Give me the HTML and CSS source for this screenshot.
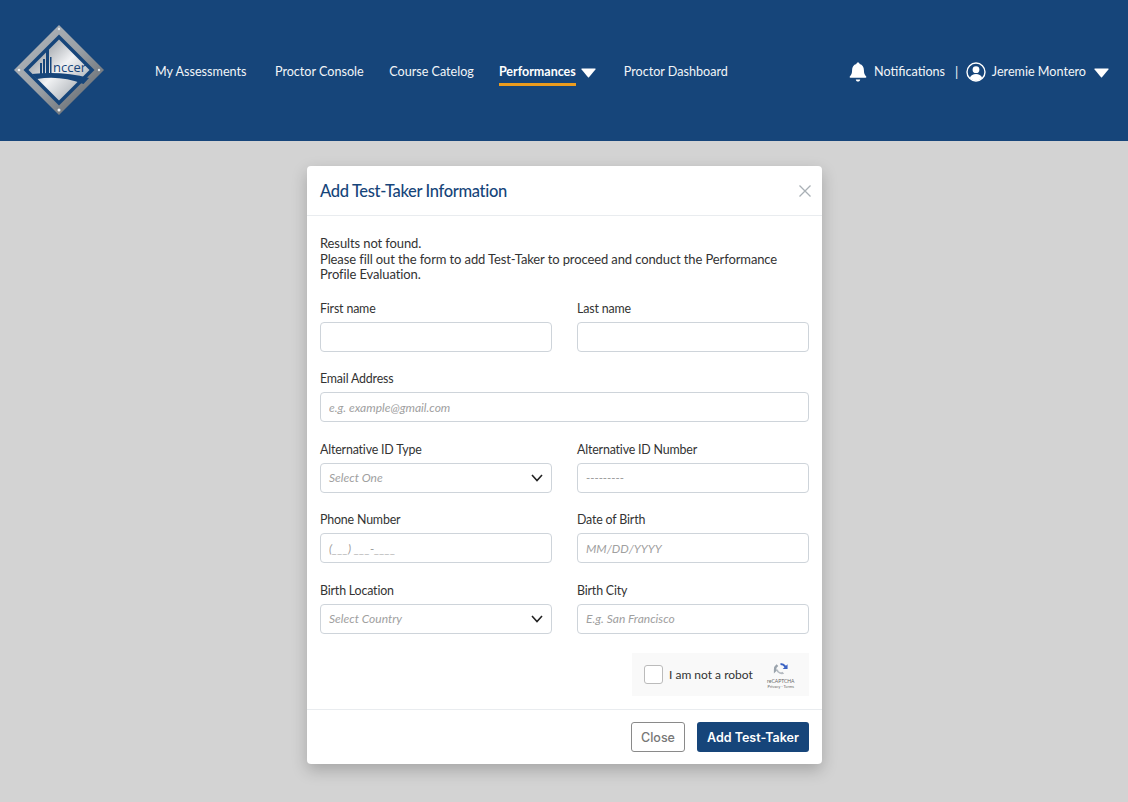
FILE: index.html
```html
<!DOCTYPE html>
<html lang="en">
<head>
    <meta charset="UTF-8">
    <meta name="viewport" content="width=device-width, initial-scale=1.0">
    <title>Add Test-Taker Information</title>
    <link rel="stylesheet" href="styles.css">
</head>
<body>

    <header class="topbar">
        <svg class="logo" width="92" height="92" viewBox="0 0 92 92" aria-label="NCCER logo">
            <defs>
                <linearGradient id="frame" x1="0" y1="0" x2="1" y2="1">
                    <stop offset="0" stop-color="#b4b9be"/>
                    <stop offset="0.5" stop-color="#9aa0a6"/>
                    <stop offset="1" stop-color="#54595f"/>
                </linearGradient>
                <linearGradient id="plate" x1="0" y1="0" x2="1" y2="1">
                    <stop offset="0.1" stop-color="#8b9197"/>
                    <stop offset="0.5" stop-color="#f1f2f4"/>
                    <stop offset="0.9" stop-color="#a3a9af"/>
                </linearGradient>
            </defs>
            <polygon points="46,1 91,46 46,91 1,46" fill="url(#frame)"/>
            <polygon points="46,10.5 81.5,46 46,81.5 10.5,46" fill="#16457a"/>
            <polygon points="46,15.5 76.5,46 46,76.5 15.5,46" fill="url(#plate)"/>
            <path d="M19 50 Q50 47 76 54 L70.5 60 Q47 51 24 55 Z" fill="#16457a"/>
            <path d="M27 39h2v11h-2zM30 35h2v15h-2zM33 27l3-2v25h-3zM37 33h1.5v17h-1.5z" fill="#16457a"/>
            <text class="logo-text" x="40" y="48">nccer</text>
            <circle cx="46" cy="5" r="1.2" fill="#dfe3e6"/>
            <circle cx="46" cy="86" r="1.5" fill="#f0f2f4"/>
            <circle cx="6" cy="46" r="1.3" fill="#f0f2f4"/>
            <circle cx="86" cy="46" r="1.2" fill="#dfe3e6"/>
        </svg>

        <nav class="mainnav">
            <a class="navlink nav-assess" href="#">My Assessments</a>
            <a class="navlink" href="#">Proctor Console</a>
            <a class="navlink nav-catalog" href="#">Course Catelog</a>
            <a class="navlink active" href="#">Performances</a>
            <svg class="caret caret-active" width="15" height="10" viewBox="0 0 15 10"><path d="M1 0.5h13c0.5 0 0.7 0.5 0.4 0.9L8 9.3c-0.3 0.3-0.7 0.3-1 0L0.6 1.4C0.3 1 0.5 0.5 1 0.5z" fill="#fff"/></svg>
            <a class="navlink" href="#">Proctor Dashboard</a>
        </nav>

        <div class="usernav">
            <svg width="18" height="20" viewBox="0 0 18 20"><path d="M9 0.5c1 0 1.6 0.7 1.6 1.5c2.9 0.7 4.3 3 4.3 6c0 3.6 0.8 4.8 2.3 6.5c0.4 0.5 0.1 1.2-0.6 1.2H1.4c-0.7 0-1-0.7-0.6-1.2C2.3 12.8 3.1 11.6 3.1 8c0-3 1.4-5.3 4.3-6C7.4 1.2 8 0.5 9 0.5zM6.8 17.4h4.4c0 1.2-1 2.1-2.2 2.1s-2.2-0.9-2.2-2.1z" fill="#fff"/></svg>
            <a class="navlink notif" href="#">Notifications</a>
            <span class="sep">|</span>
            <svg width="20" height="20" viewBox="0 0 20 20"><circle cx="10" cy="10" r="9" fill="none" stroke="#fff" stroke-width="1.4"/><circle cx="10" cy="7.7" r="3.4" fill="#fff"/><path d="M3.9 15.7c1-2.5 3.3-3.7 6.1-3.7s5.1 1.2 6.1 3.7c-1.5 1.7-3.7 2.9-6.1 2.9s-4.6-1.2-6.1-2.9z" fill="#fff"/></svg>
            <a class="navlink user" href="#">Jeremie Montero</a>
            <svg class="caret" width="15" height="10" viewBox="0 0 15 10"><path d="M1 0.5h13c0.5 0 0.7 0.5 0.4 0.9L8 9.3c-0.3 0.3-0.7 0.3-1 0L0.6 1.4C0.3 1 0.5 0.5 1 0.5z" fill="#fff"/></svg>
        </div>
    </header>

    <main class="backdrop">
        <div class="modal">
            <div class="modal-head">
                <h2>Add Test-Taker Information</h2>
                <svg class="close-x" width="12" height="12" viewBox="0 0 12 12"><path d="M0.5 0.5l11 11M11.5 0.5l-11 11" stroke="#a9b0b5" stroke-width="1.3" fill="none"/></svg>
            </div>

            <form class="modal-body">
                <p class="intro">Results not found.<br>Please fill out the form to add Test-Taker to proceed and conduct the Performance Profile Evaluation.</p>

                <div class="form-grid">
                    <div class="field">
                        <label>First name</label>
                        <input type="text">
                    </div>
                    <div class="field">
                        <label>Last name</label>
                        <input type="text">
                    </div>
                    <div class="field wide">
                        <label>Email Address</label>
                        <input type="text" placeholder="e.g. example@gmail.com">
                    </div>
                    <div class="field">
                        <label>Alternative ID Type</label>
                        <div class="select">
                            <span>Select One</span>
                            <svg width="12" height="8" viewBox="0 0 12 8"><path d="M1 1l5 5.5L11 1" stroke="#222" stroke-width="1.6" fill="none"/></svg>
                        </div>
                    </div>
                    <div class="field">
                        <label>Alternative ID Number</label>
                        <input type="text" placeholder="---------">
                    </div>
                    <div class="field">
                        <label>Phone Number</label>
                        <input type="text" placeholder="(___) ___-____">
                    </div>
                    <div class="field">
                        <label>Date of Birth</label>
                        <input type="text" placeholder="MM/DD/YYYY">
                    </div>
                    <div class="field">
                        <label>Birth Location</label>
                        <div class="select">
                            <span>Select Country</span>
                            <svg width="12" height="8" viewBox="0 0 12 8"><path d="M1 1l5 5.5L11 1" stroke="#222" stroke-width="1.6" fill="none"/></svg>
                        </div>
                    </div>
                    <div class="field">
                        <label>Birth City</label>
                        <input type="text" placeholder="E.g. San Francisco">
                    </div>
                </div>

                <div class="captcha-row">
                    <div class="captcha">
                        <span class="check"></span>
                        <span class="robot">I am not a robot</span>
                        <div class="recaptcha">
                            <svg width="15" height="15" viewBox="0 0 17 17">
                                <path d="M8.5 1a7.5 7.5 0 0 1 6.2 3.3L16.5 2.5V8H11l2-2a5.3 5.3 0 0 0-4.5-2.6z" fill="#3b63c4"/>
                                <path d="M1 8.5a7.5 7.5 0 0 1 3-6L6 4.6A5 5 0 0 0 3.5 8.5L5.5 8.5 1 13z" fill="#9aa3ac"/>
                                <path d="M3.5 9h2.2a3.2 3.2 0 0 0 5 2l2 2.3A7 7 0 0 1 3.5 9z" fill="#b4bac0"/>
                            </svg>
                            <span class="rc-name">reCAPTCHA</span>
                            <span class="rc-terms">Privacy - Terms</span>
                        </div>
                    </div>
                </div>
            </form>

            <div class="modal-foot">
                <button class="btn btn-close" type="button">Close</button>
                <button class="btn btn-add" type="button">Add Test-Taker</button>
            </div>
        </div>
    </main>

</body>
</html>
```

FILE: styles.css
```css
* {
    box-sizing: border-box;
}
html, body {
    height: 100%;
}
body {
    margin: 0;
    background: #d3d3d3;
    font-family: Lato, "Open Sans", sans-serif;
    font-size: 13px;
    color: #333;
    overflow: hidden;
}

/* top bar */
.topbar {
    display: flex;
    align-items: center;
    height: 141px;
    padding: 0 19px 0 13px;
    background: #16457a;
}
.logo {
    flex: none;
    margin-bottom: 1px;
}
.logo-text {
    font-family: "Open Sans", sans-serif;
    font-size: 13px;
    fill: #16457a;
}
.mainnav {
    display: flex;
    align-items: center;
    margin-left: 50px;
    padding-top: 2px;
}
.navlink {
    text-decoration: none;
    font-size: 12.6px;
    line-height: 30px;
    white-space: nowrap;
    color: #f2f5f8;
}
.mainnav .navlink {
    margin-right: 25.5px;
}
.mainnav .nav-assess {
    margin-right: 28.5px;
}
.mainnav .nav-catalog {
    margin-right: 25px;
}
.mainnav .active {
    position: relative;
    margin-right: 5.5px;
    font-weight: 700;
    font-size: 12.5px;
    color: #fff;
}
.mainnav .active::after {
    content: "";
    position: absolute;
    left: 0;
    right: 0;
    bottom: 1px;
    height: 3px;
    background: #eb9c1f;
}
.caret {
    margin-top: 2px;
}
.caret-active {
    margin-right: 27.5px;
}
.usernav {
    display: flex;
    align-items: center;
    margin-left: auto;
    padding-top: 2px;
}
.notif {
    margin-left: 7px;
}
.sep {
    margin: 0 7.5px 0 10px;
    color: #f2f5f8;
}
.user {
    margin: 0 8px 0 6px;
}

/* modal */
.backdrop {
    display: flex;
    justify-content: center;
    padding-top: 25px;
    padding-left: 1px;
}
.modal {
    width: 515px;
    height: 598px;
    background: #fff;
    border-radius: 4px;
    box-shadow: 0 6px 16px rgba(0, 0, 0, 0.22);
    display: flex;
    flex-direction: column;
}
.modal-head {
    display: flex;
    align-items: center;
    justify-content: space-between;
    height: 50px;
    padding: 0 11px 0 13px;
    border-bottom: 1px solid #e9ecef;
}
.modal-head h2 {
    margin: 0;
    font-size: 16.5px;
    font-weight: 500;
    letter-spacing: -0.35px;
    color: #16457a;
}
.modal-body {
    flex: 1;
    padding: 20px 13px 0;
}
.intro {
    margin: 0;
    line-height: 15.5px;
    font-size: 13px;
    letter-spacing: -0.11px;
}
.form-grid {
    display: grid;
    grid-template-columns: 232px 232px;
    column-gap: 25px;
    row-gap: 18.5px;
    margin-top: 17px;
}
.field {
    display: flex;
    flex-direction: column;
}
.field.wide {
    grid-column: 1 / 3;
}
.field label {
    font-size: 12.4px;
    letter-spacing: -0.17px;
    line-height: 16px;
    padding-top: 1px;
    height: 17px;
    margin-bottom: 5px;
}
.field input, .select {
    width: 100%;
    height: 30px;
    padding: 0 8px;
    border: 1px solid #ced4da;
    border-radius: 4px;
    background: #fff;
    font-family: Lato, sans-serif;
    font-size: 12px;
    outline: none;
}
.field input::placeholder, .select span {
    color: #a0a0a0;
    font-style: italic;
    opacity: 1;
}
.select {
    display: flex;
    align-items: center;
    justify-content: space-between;
}
.captcha-row {
    display: flex;
    justify-content: flex-end;
    margin-top: 19px;
}
.captcha {
    display: flex;
    align-items: center;
    width: 177px;
    height: 43px;
    padding-left: 12px;
    background: #f9f9f9;
}
.check {
    width: 19px;
    height: 19px;
    border: 1px solid #bbb;
    border-radius: 3px;
    background: #fff;
}
.robot {
    margin-left: 6px;
    font-size: 12px;
}
.recaptcha {
    display: flex;
    flex-direction: column;
    align-items: center;
    width: 28px;
    margin-left: 14px;
    padding-top: 4px;
    color: #666;
}
.rc-name {
    margin-top: 1px;
    font-size: 5px;
    line-height: 6px;
    white-space: nowrap;
}
.rc-terms {
    font-size: 4px;
    line-height: 6px;
    white-space: nowrap;
}
.modal-foot {
    display: flex;
    justify-content: flex-end;
    align-items: center;
    gap: 12px;
    height: 55px;
    padding: 0 13px 0 0;
    border-top: 1px solid #e9ecef;
}
.btn {
    height: 30px;
    border-radius: 3px;
    font-family: Inter, sans-serif;
    font-size: 12.5px;
    font-weight: 600;
    cursor: pointer;
}
.btn-close {
    width: 54px;
    border: 1px solid #8a8a8a;
    background: #fff;
    color: #777;
    font-weight: 500;
}
.btn-add {
    width: 112px;
    border: 0;
    background: #16457a;
    color: #fff;
}
```
